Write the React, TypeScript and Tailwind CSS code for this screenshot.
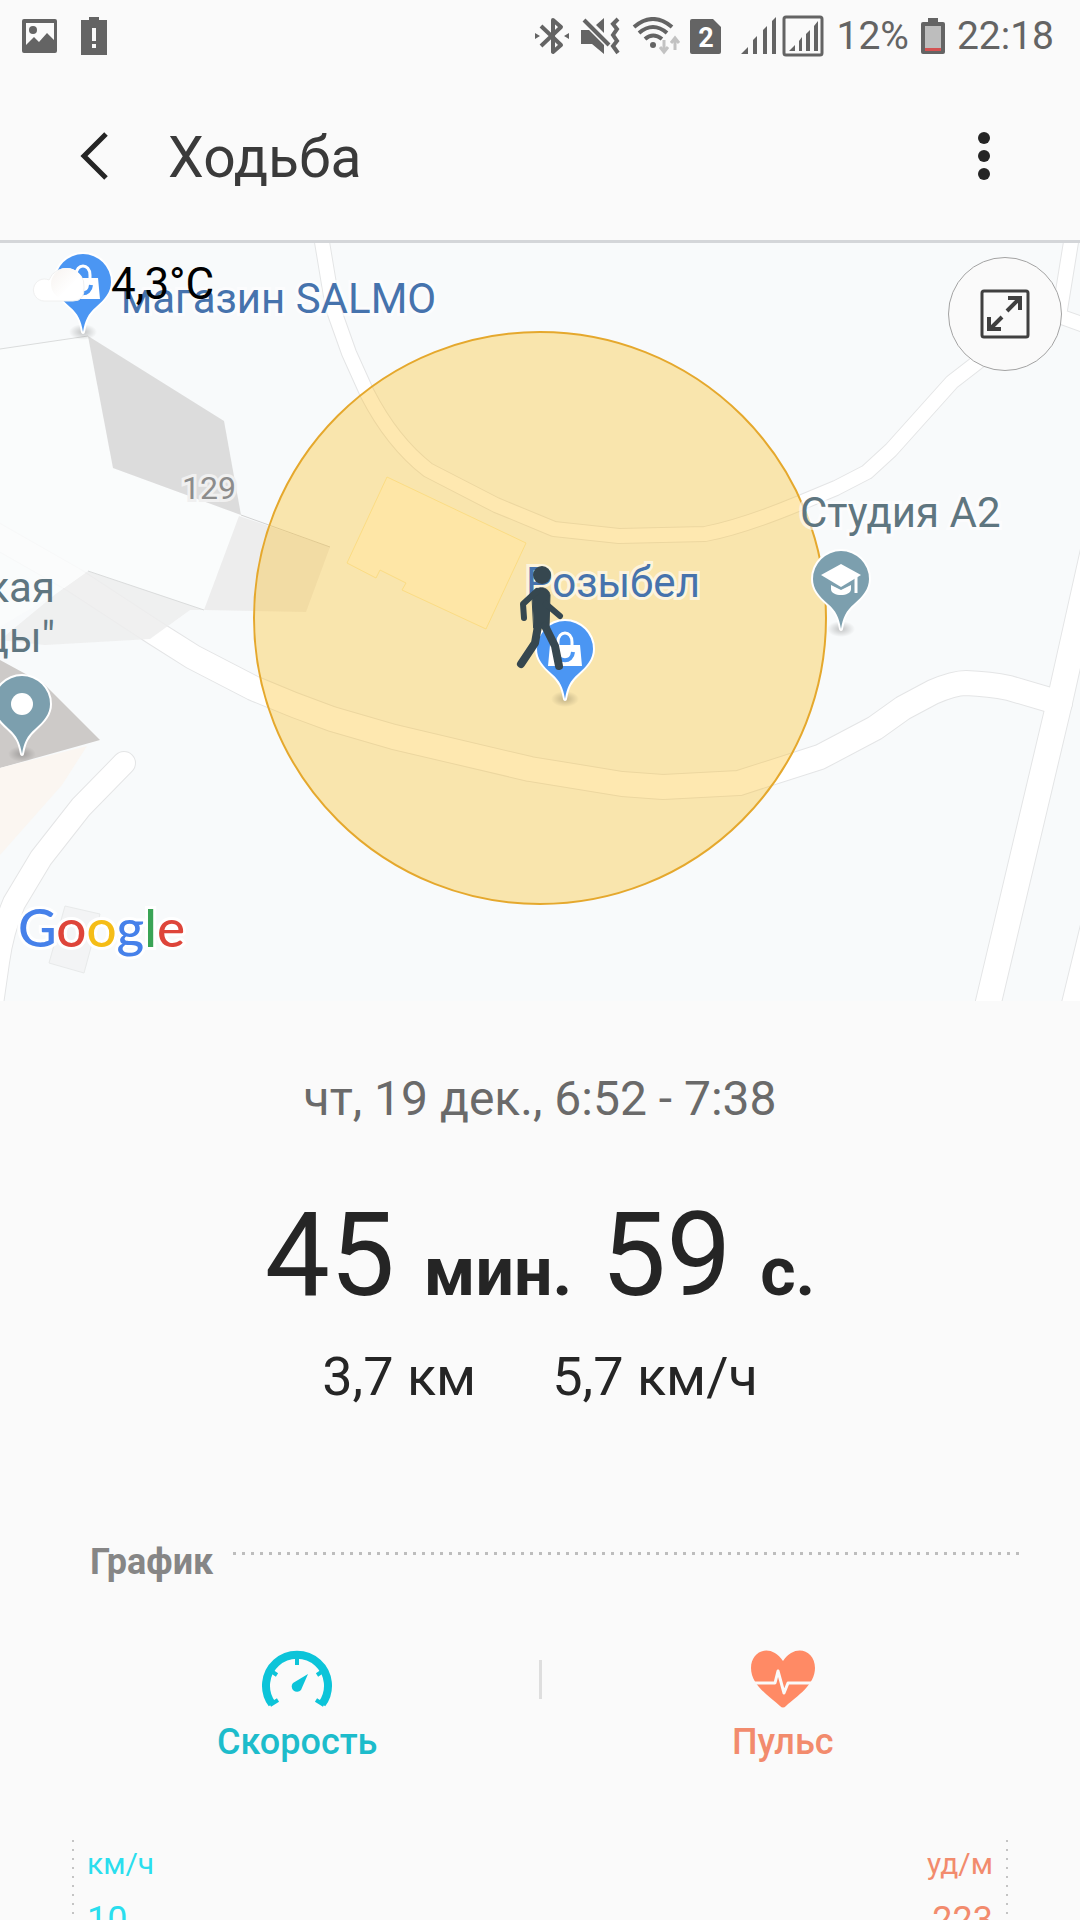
import type { ReactNode } from "react"

const ROADS = [
  { d: "M1072 236L1059 316L1084 325", w: 14 },
  {
    d: "M321 236L333 308L349 353L367 393Q392 442 428 470L496 505L554 529L619 536L705 534Q742 527 800 503L836 488L867 472L891 450L952 382L974 365L1012 335",
    w: 14,
  },
  {
    d: "M-10 532L74 580L155 633L193 657L253 688Q292 705 332 719L394 737L530 769L622 784L663 787L739 783L820 757L875 728L903 708L933 692Q954 683 966 683Q990 684 1009 688L1060 703",
    w: 24,
  },
  { d: "M988 1004L1060 700L1094 548", w: 25 },
  { d: "M1074 1004L1094 922", w: 24 },
  { d: "M124 763L81 807L41 858L14 903Q2 932 -2 962L-8 1004", w: 22 },
]

const PIN =
  "M0 78C-2 66-5 60-13 53C-22 45-28 38-28 28A28 28 0 1 1 28 28C28 38 22 45 13 53C5 60 2 66 0 78Z"

function Pin({ x, y, color, children }: { x: number; y: number; color: string; children: ReactNode }) {
  return (
    <g transform={`translate(${x} ${y})`}>
      <ellipse cx="0" cy="78" rx="14" ry="8" fill="url(#pin-shadow)" />
      <path d={PIN} fill={color} stroke="#fff" strokeWidth="4" strokeLinejoin="round" className="[paint-order:stroke]" />
      {children}
    </g>
  )
}

function Bag() {
  return (
    <>
      <path d="M-7 25V21C-7 9 7 9 7 21V25" fill="none" stroke="#fff" strokeWidth="3" />
      <path d="M-15 24H15L17 45H-17Z" fill="#fff" />
      <path d="M-8 31C-7 42 7 42 8 31" fill="none" stroke="#4b96f3" strokeWidth="4" />
    </>
  )
}

function MapDrawing() {
  return (
    <svg viewBox="0 243 1080 758" preserveAspectRatio="xMidYMid slice" className="block h-full w-full" aria-hidden="true">
      <rect x="0" y="243" width="1080" height="758" fill="#f8fafb" />
      <path d="M65 906L100 914L84 973L49 963Z" fill="#f3f4f5" stroke="#e8eaea" />

      {ROADS.map((road) => (
        <path key={road.d} d={road.d} fill="none" stroke="#e4e5e6" strokeWidth={road.w + 2} strokeLinecap="round" strokeLinejoin="round" />
      ))}
      {ROADS.map((road) => (
        <path key={road.d} d={road.d} fill="none" stroke="#fff" strokeWidth={road.w} strokeLinecap="round" strokeLinejoin="round" />
      ))}

      {/* buildings */}
      <path d="M0 640L57 593L88 571L204 610H190L150 639L45 645Z" fill="#ededed" opacity="0.85" />
      <path d="M0 349L88 336L113 468L241 515L204 610L88 571L57 593L0 627Z" fill="#fafcfb" opacity="0.85" />
      <path d="M0 349L88 336M88 571L204 610" stroke="#dadcdc" fill="none" />
      <path d="M88 336L224 421L241 515L113 468Z" fill="#dcdcdc" />
      <path d="M239 516L330 547L306 612L204 610Z" fill="#ededed" />
      <path d="M241 515L330 547" stroke="#d2d2d2" strokeWidth="1" />
      <path d="M0 660L44 684L100 740L0 768Z" fill="#cdcac8" />
      <path d="M0 768L87 746L62 785L0 855Z" fill="#fbf6f1" />

      {/* accuracy radius */}
      <circle cx="540" cy="618" r="286" fill="#fbbd1e" fillOpacity="0.35" stroke="#e5a82d" strokeWidth="2" />
      <path d="M387 477L526 543L486 629L402 590L406 583L380 570L376 578L347 563Z" fill="#fee6a6" stroke="#fbdc84" />
    </svg>
  )
}

function MapPins() {
  return (
    <svg viewBox="0 243 1080 758" preserveAspectRatio="xMidYMid slice" className="absolute inset-0 h-full w-full" aria-hidden="true">
      <defs>
        <radialGradient id="pin-shadow">
          <stop offset="0" stopColor="#000" stopOpacity="0.22" />
          <stop offset="1" stopColor="#000" stopOpacity="0" />
        </radialGradient>
        <linearGradient id="cloud" x1="0" y1="0" x2="1" y2="1">
          <stop offset="0" stopColor="#f7f3f0" />
          <stop offset="0.6" stopColor="#fff" />
        </linearGradient>
      </defs>
      <Pin x={83} y={254} color="#4b96f3">
        <Bag />
      </Pin>
      <Pin x={841} y={551} color="#7c9fae">
        <path d="M0 13L20 24L0 36L-20 24Z" fill="#fff" />
        <path d="M-10 34L0 39L10 34V38C10 46-10 46-10 38Z" fill="#fff" />
        <path d="M15 26V42" stroke="#fff" strokeWidth="3" />
      </Pin>
      <Pin x={22} y={676} color="#7c9fae">
        <circle cx="0" cy="28" r="11" fill="#fff" />
      </Pin>
      <Pin x={565} y={621} color="#4b96f3">
        <Bag />
      </Pin>

      {/* weather cloud */}
      <path d="M44 301A11 11 0 1 1 49 280A18 17 0 0 1 84 287Q85 301 73 301Z" fill="#fff" stroke="#f0f0f0" />
      <circle cx="67" cy="284" r="16" fill="url(#cloud)" />
    </svg>
  )
}

function Walker() {
  return (
    <svg viewBox="0 243 1080 758" preserveAspectRatio="xMidYMid slice" className="absolute inset-0 h-full w-full" aria-hidden="true">
      <g fill="#36474f" stroke="#36474f" strokeLinecap="round" strokeLinejoin="round">
        <circle cx="542" cy="575" r="9" stroke="none" />
        <path d="M532 594C535 586 548 585 550 595L549 628H534Z" strokeWidth="1" />
        <path d="M537 591L523 604L524 618" fill="none" strokeWidth="6" />
        <path d="M546 604L560 616" fill="none" strokeWidth="6" />
        <path d="M538 626L535 643L521 664" fill="none" strokeWidth="8" />
        <path d="M545 626L555 646L559 666" fill="none" strokeWidth="8" />
      </g>
    </svg>
  )
}

const haloLabel =
  "absolute whitespace-nowrap text-[42px] leading-[48px] [paint-order:stroke] [-webkit-text-stroke:6px_rgba(255,255,255,0.6)]"

function RouteMap() {
  return (
    <section aria-label="Карта" className="relative h-[758px] overflow-hidden">
      <MapDrawing />
      <span className={`${haloLabel} top-[32px] left-[121px] text-[#4673ad]`}>магазин SALMO</span>
      <span className={`${haloLabel} top-[316px] left-[526px] text-[#4673ad]`}>Розыбел</span>
      <span className={`${haloLabel} top-[246px] left-[800px] text-[#5f7680]`}>Студия А2</span>
      <span className="absolute top-[225px] left-[182px] text-[32px] leading-[40px] text-[#8c8c8c] [paint-order:stroke] [-webkit-text-stroke:6px_#f0f0f0]">
        129
      </span>
      <div className="absolute top-[320px] left-0 flex w-[55px] flex-col items-end text-[42px] leading-[50px] text-[#5f7680]">
        <span>кая</span>
        <span>цы"</span>
      </div>
      <MapPins />
      <Walker />
      <span className="absolute top-[17px] left-[111px] text-[44px] leading-[48px] text-black">4,3°C</span>
      <span className="absolute top-[654px] left-[18px] font-['Lato'] text-[53px] leading-[60px] font-medium text-[#4681ea] [paint-order:stroke] [-webkit-text-stroke:6px_#fff]">
        G<span className="text-[#de453a]">o</span>
        <span className="text-[#f5bd17]">o</span>g<span className="text-[#3aa456]">l</span>
        <span className="text-[#de453a]">e</span>
      </span>
      <button
        aria-label="Развернуть карту"
        className="absolute top-[14px] right-[18px] flex size-[114px] items-center justify-center rounded-full border border-[#a3a3a3] bg-[#fafafa]"
      >
        <svg width="50" height="50" viewBox="0 0 50 50" fill="none" stroke="#404040" strokeWidth="3">
          <rect x="2" y="2" width="46" height="46" rx="2" />
          <path d="M27 22L39 10M28 9H40V21M22 28L10 40M9 28V40H21" strokeWidth="4" />
        </svg>
      </button>
    </section>
  )
}

function StatusBar() {
  return (
    <div className="flex h-[72px] items-center justify-between pr-[26px] pl-[22px] text-[39px] leading-[48px] text-[#646464]">
      <div className="flex items-center gap-6">
        <svg width="35" height="34" viewBox="0 0 35 34" fill="#646464">
          <path fillRule="evenodd" d="M2 0H33Q35 0 35 2V32Q35 34 33 34H2Q0 34 0 32V2Q0 0 2 0ZM4 4V26L12 18L17 23L25 14L32 21V4Z" />
          <circle cx="11" cy="11" r="4" />
        </svg>
        <svg width="26" height="38" viewBox="0 0 26 38" fill="#646464">
          <path d="M8 0H18V3H26V38H0V3H8Z" />
          <path d="M11 11H15V24H11ZM11 27H15V31H11Z" fill="#fafafa" />
        </svg>
      </div>
      <div className="flex items-center gap-3">
        <svg width="34" height="38" viewBox="0 0 34 38" fill="none" stroke="#646464" strokeWidth="4">
          <path d="M6 9L26 28L18 35V3L26 10L6 29" strokeLinejoin="round" />
          <path d="M0 16L5 19L0 22ZM34 16L29 19L34 22Z" fill="#646464" stroke="none" />
        </svg>
        <svg width="39" height="38" viewBox="0 0 39 38" fill="#646464">
          <path d="M0 13H8L23 28V37L11 27H0ZM15 8L23 1V16Z" />
          <path d="M3 3L28 28" stroke="#646464" strokeWidth="4" />
          <path d="M37 2L32 7L36 12L32 18L36 24L32 29L37 36" fill="none" stroke="#646464" strokeWidth="4" />
        </svg>
        <div className="flex items-center gap-2">
          <svg width="50" height="38" viewBox="0 0 50 38" fill="none" stroke="#646464" strokeWidth="4">
            <path d="M2 10Q21-6 40 10M7 16Q21 4 35 16M13 22Q21 15 30 22" />
            <circle cx="21" cy="28" r="3" fill="#646464" stroke="none" />
            <path d="M32 23V34M28 30L32 35L36 30M43 33V22M39 26L43 21L47 26" stroke="#c2c2c2" strokeWidth="3" />
          </svg>
          <svg width="31" height="35" viewBox="0 0 31 35">
            <path d="M2 0H23L31 8V33Q31 35 29 35H2Q0 35 0 33V2Q0 0 2 0Z" fill="#646464" />
            <text x="16" y="28" textAnchor="middle" fontSize="27" fontWeight="700" fill="#fff">
              2
            </text>
          </svg>
        </div>
        <div className="ml-2 flex items-center gap-[6px]">
          <svg width="35" height="38" viewBox="0 0 35 38" fill="#646464">
            <path d="M0 37L7 30V37ZM12 37V23L16 19V37ZM22 37V13L26 9V37ZM31 37V4L35 0V37Z" />
          </svg>
          <svg width="42" height="42" viewBox="0 0 42 42" fill="#646464">
            <rect x="2" y="2" width="38" height="38" rx="2" fill="none" stroke="#646464" strokeWidth="3" />
            <path d="M7 36L13 30V36ZM17 36V26L20 22V36ZM24 36V19L28 15V36ZM32 36V11L36 6V36Z" />
          </svg>
        </div>
        <span>12%</span>
        <svg width="24" height="36" viewBox="0 0 24 36">
          <path d="M7 0H17V4H22Q24 4 24 6V34Q24 36 22 36H2Q0 36 0 34V6Q0 4 2 4H7Z" fill="#646464" />
          <path d="M4 8H20V30H4Z" fill="#bdbdbd" />
          <path d="M4 30H20V33H4Z" fill="#d35252" />
        </svg>
        <span>22:18</span>
      </div>
    </div>
  )
}

function SpeedIcon() {
  return (
    <svg width="72" height="58" viewBox="0 0 72 58" fill="none" stroke="#0cc4d9" strokeWidth="8">
      <path d="M11 54A31 31 0 1 1 61 54" />
      <path d="M36 7V15M10 21L16 25M62 21L56 25M9 55L17 50M63 55L55 50" strokeWidth="4" />
      <path d="M47 24L40 40A5 5 0 1 1 32 33Z" fill="#0cc4d9" stroke="none" />
    </svg>
  )
}

function PulseIcon() {
  return (
    <svg width="64" height="58" viewBox="0 0 64 58">
      <path d="M32 11C20-7 0 0 0 18C0 35 18 46 29 56Q32 59 35 56C46 46 64 35 64 18C64 0 44-7 32 11Z" fill="#ff8a65" />
      <path d="M0 33H24L27 21L33 43L37 33H64" fill="none" stroke="#fafafa" strokeWidth="3" strokeLinejoin="round" />
    </svg>
  )
}

const dottedColumn = "w-[2px] bg-[repeating-linear-gradient(to_bottom,#c4c4c4_0_2px,transparent_2px_9px)]"

export default function App() {
  return (
    <div className="flex h-screen flex-col overflow-hidden bg-[#fafafa] font-['Roboto',sans-serif] text-[#252525]">
      <StatusBar />
      <header className="flex h-[171px] shrink-0 items-center border-b-3 border-[#d4d6d9] pr-[90px] pl-[80px]">
        <button aria-label="Назад">
          <svg width="28" height="48" viewBox="0 0 28 48" fill="none" stroke="#252525" strokeWidth="5">
            <path d="M26 2L4 24L26 46" />
          </svg>
        </button>
        <h1 className="ml-[60px] flex-1 pt-1 text-[57px] leading-[64px] text-[#3a3a3a]">Ходьба</h1>
        <button aria-label="Ещё">
          <svg width="12" height="48" viewBox="0 0 12 48" fill="#252525">
            <circle cx="6" cy="6" r="6" />
            <circle cx="6" cy="24" r="6" />
            <circle cx="6" cy="42" r="6" />
          </svg>
        </button>
      </header>

      <main className="flex min-h-0 flex-1 flex-col">
        <div className="shrink-0">
          <RouteMap />
        </div>

        <section className="shrink-0 pt-[66px] text-center">
          <p className="text-[48px] leading-[64px] text-[#6a6a6a]">чт, 19 дек., 6:52 - 7:38</p>
          <p className="mt-[54px] text-[116px] leading-[140px]">
            45 <span className="text-[68px] leading-none font-bold">мин.</span> 59{" "}
            <span className="text-[68px] leading-none font-bold">с.</span>
          </p>
          <p className="mt-4 flex justify-center gap-[76px] text-[54px] leading-[72px]">
            <span>3,7 км</span>
            <span>5,7 км/ч</span>
          </p>
        </section>

        <section className="mt-[125px] flex flex-1 flex-col">
          <div className="flex pr-[60px] pl-[90px]">
            <h2 className="text-[36px] leading-[48px] font-bold text-[#868686]">График</h2>
            <div className="mt-[14px] ml-5 h-[3px] flex-1 bg-[repeating-linear-gradient(to_right,#bdbdbd_0_3px,transparent_3px_9px)]" />
          </div>

          <div className="mt-16 flex px-14 text-[36px] leading-[40px] font-medium">
            <button className="flex flex-1 flex-col items-center gap-[14px] text-[#1dbccb]">
              <SpeedIcon />
              Скорость
            </button>
            <div className="mt-[10px] h-[39px] w-[3px] bg-[#dedede]" />
            <button className="flex flex-1 flex-col items-center gap-[14px] text-[#f28b6d]">
              <PulseIcon />
              Пульс
            </button>
          </div>

          <div className="mt-[78px] flex flex-1 justify-between px-[72px]">
            <div className="flex gap-[13px]">
              <div className={dottedColumn} />
              <div className="flex flex-col gap-4 pt-1 text-[#2adeee]">
                <span className="text-[30px] leading-[40px]">км/ч</span>
                <span className="text-[36px] leading-[40px]">10</span>
              </div>
            </div>
            <div className="flex gap-[13px]">
              <div className="flex flex-col items-end gap-4 pt-1 text-[#f28b6d]">
                <span className="text-[30px] leading-[40px]">уд/м</span>
                <span className="text-[36px] leading-[40px]">223</span>
              </div>
              <div className={dottedColumn} />
            </div>
          </div>
        </section>
      </main>
    </div>
  )
}
